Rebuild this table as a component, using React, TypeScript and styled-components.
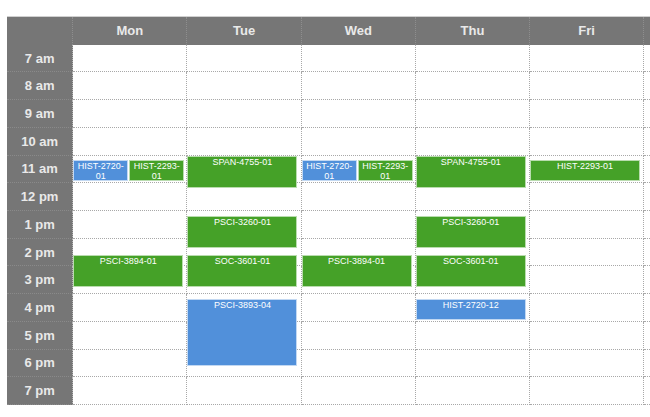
import styled, { createGlobalStyle } from "styled-components";

const GlobalStyle = createGlobalStyle`
  html, body {
    margin: 0;
    padding: 0;
    background: #fff;
    overflow: hidden;
  }
  body {
    font-family: "Liberation Sans", Arial, Helvetica, sans-serif;
  }
`;

const HOUR_PX = 27.73;
const MIN_PX = HOUR_PX / 60;
const COL_W = 114.2;

const hours = ["7 am", "8 am", "9 am", "10 am", "11 am", "12 pm", "1 pm", "2 pm", "3 pm", "4 pm", "5 pm", "6 pm", "7 pm"];
const days = ["Mon", "Tue", "Wed", "Thu", "Fri", "Sat"];

type Course = {
  code: string;
  day: string;
  start: string; // HH:MM, 24h
  end: string;
  kind: "green" | "blue";
  lane?: number;
  lanes?: number;
};

const courses: Course[] = [
  { code: "HIST-2720-01", day: "Mon", start: "11:10", end: "11:55", kind: "blue", lane: 0, lanes: 2 },
  { code: "HIST-2293-01", day: "Mon", start: "11:10", end: "11:55", kind: "green", lane: 1, lanes: 2 },
  { code: "PSCI-3894-01", day: "Mon", start: "14:35", end: "15:45", kind: "green" },
  { code: "SPAN-4755-01", day: "Tue", start: "11:00", end: "12:10", kind: "green" },
  { code: "PSCI-3260-01", day: "Tue", start: "13:10", end: "14:20", kind: "green" },
  { code: "SOC-3601-01", day: "Tue", start: "14:35", end: "15:45", kind: "green" },
  { code: "PSCI-3893-04", day: "Tue", start: "16:10", end: "18:35", kind: "blue" },
  { code: "HIST-2720-01", day: "Wed", start: "11:10", end: "11:55", kind: "blue", lane: 0, lanes: 2 },
  { code: "HIST-2293-01", day: "Wed", start: "11:10", end: "11:55", kind: "green", lane: 1, lanes: 2 },
  { code: "PSCI-3894-01", day: "Wed", start: "14:35", end: "15:45", kind: "green" },
  { code: "SPAN-4755-01", day: "Thu", start: "11:00", end: "12:10", kind: "green" },
  { code: "PSCI-3260-01", day: "Thu", start: "13:10", end: "14:20", kind: "green" },
  { code: "SOC-3601-01", day: "Thu", start: "14:35", end: "15:45", kind: "green" },
  { code: "HIST-2720-12", day: "Thu", start: "16:10", end: "16:55", kind: "blue" },
  { code: "HIST-2293-01", day: "Fri", start: "11:10", end: "11:55", kind: "green" },
];

const toMinutes = (t: string) => {
  const [h, m] = t.split(":").map(Number);
  return (h - 7) * 60 + m;
};

const Page = styled.div`
  box-sizing: border-box;
  width: 100vw;
  overflow: hidden;
  padding: 16px 0 0 7px;
`;

const Calendar = styled.div`
  display: flex;
  width: max-content;
  border-top: 1px solid #d0d0d0;
`;

const Column = styled.div<{ $w: number }>`
  display: flex;
  flex-direction: column;
  width: ${(p) => p.$w}px;
  flex: none;
`;

const HeadCell = styled.div`
  box-sizing: border-box;
  height: 27.7px;
  background: #767676;
  border-right: 1px dotted #8e8e8e;
  color: #e9e9e9;
  font-size: 13px;
  font-weight: bold;
  display: flex;
  align-items: center;
  justify-content: center;
`;

const TimeCell = styled.div`
  box-sizing: border-box;
  height: ${HOUR_PX}px;
  background: #767676;
  border-bottom: 1px dotted #8a8a8a;
  border-right: 1px dotted #b5b5b5;
  color: #e9e9e9;
  font-size: 13px;
  font-weight: bold;
  display: flex;
  align-items: center;
  justify-content: center;
`;

const DayBody = styled.div`
  position: relative;
  display: flex;
  flex-direction: column;
`;

const Slot = styled.div`
  box-sizing: border-box;
  height: ${HOUR_PX}px;
  border-bottom: 1px dotted #a8a8a8;
  border-right: 1px dotted #a8a8a8;
  background: #fff;
`;

const Event = styled.div<{ $kind: "green" | "blue" }>`
  position: absolute;
  box-sizing: border-box;
  background: ${(p) => (p.$kind === "green" ? "#45a128" : "#5190da")};
  border: 1px solid ${(p) => (p.$kind === "green" ? "#b9dcae" : "#c2d8f2")};
  color: #fff;
  font-size: 9px;
  line-height: 10px;
  text-align: center;
  overflow: hidden;
`;

export default function App() {
  return (
    <>
      <GlobalStyle />
      <Page>
        <Calendar>
          <Column $w={66.3}>
            <HeadCell />
            {hours.map((h) => (
              <TimeCell key={h}>{h}</TimeCell>
            ))}
          </Column>
          {days.map((d) => (
            <Column key={d} $w={COL_W}>
              <HeadCell>{d === "Sat" ? "" : d}</HeadCell>
              <DayBody>
                {hours.map((h) => (
                  <Slot key={h} />
                ))}
                {courses
                  .filter((c) => c.day === d)
                  .map((c, i) => {
                    const top = toMinutes(c.start) * MIN_PX;
                    const height = (toMinutes(c.end) - toMinutes(c.start)) * MIN_PX;
                    const lanes = c.lanes || 1;
                    const full = COL_W - 4.3;
                    const w = lanes > 1 ? (full + 1.2 - 1) / lanes : full;
                    const left = lanes > 1 ? (c.lane || 0) * (w + 1) : 0;
                    return (
                      <Event
                        key={i}
                        $kind={c.kind}
                        style={{ top, height, left, width: w }}
                      >
                        {c.code}
                      </Event>
                    );
                  })}
              </DayBody>
            </Column>
          ))}
        </Calendar>
      </Page>
    </>
  );
}
